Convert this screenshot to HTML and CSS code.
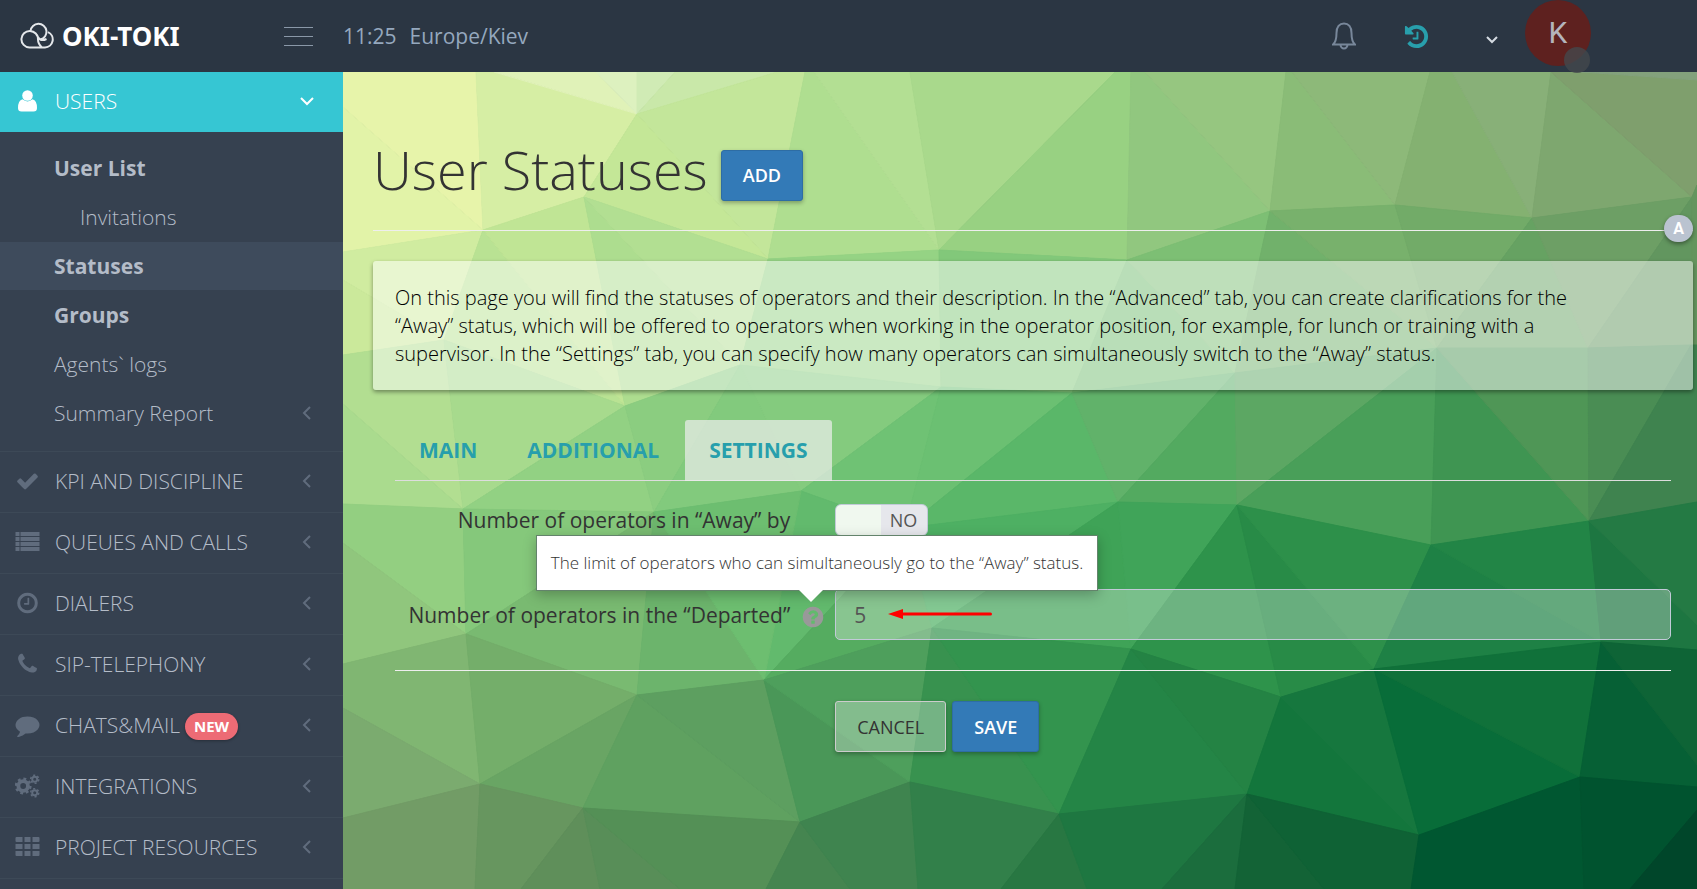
FILE: index.html
```html
<!DOCTYPE html>
<html lang="en">
<head>
<meta charset="utf-8">
<title>User Statuses</title>
<link rel="stylesheet" href="styles.css">
</head>
<body>
<header class="topbar">
  <div class="brand-area">
    <a class="brand" href="#">
      <svg class="brand-mark" viewBox="0 0 34 28" aria-hidden="true"><path d="M9.500 25.500A8.300 8.300 0 1 1 18 17.500Q18 22 22 25.500M9.500 25.500H25A8 8 0 0 0 28 10.200M10.500 9A8 8 0 1 1 20.500 17.500M17 13Q19.500 20.500 26.500 17"/></svg>
      <span class="brand-name">OKI-TOKI</span>
    </a>
    <button class="burger" type="button" aria-label="Toggle menu"><span></span><span></span><span></span></button>
  </div>
  <div class="clock"><time>11:25</time><span>Europe/Kiev</span></div>
  <div class="tools">
    <button class="tool" type="button" aria-label="Notifications"><svg class="bell" viewBox="0 0 24 28"><path d="M1 22.500C4 20 4.500 17 4.500 11C4.500 5 7.500 1.500 12 1.500S19.500 5 19.500 11C19.500 17 20 20 23 22.500ZM8.500 22.500A3.500 4 0 0 0 15.500 22.500"/></svg></button>
    <button class="tool" type="button" aria-label="History"><svg class="history" viewBox="0 0 1792 1792"><path d="M1664 896q0 156-61 298t-164 245-245 164-298 61q-172 0-327-72.500t-264-204.500q-7-10-6.500-22.500t8.500-20.500l137-138q10-9 25-9 16 2 23 12 73 95 179 147t225 52q104 0 198.500-40.500t163.500-109.500 109.500-163.500 40.500-198.500-40.500-198.500-109.500-163.500-163.500-109.500-198.500-40.500q-98 0-188 35.500t-160 101.500l137 138q31 30 14 69-17 40-59 40h-448q-26 0-45-19t-19-45v-448q0-42 40-59 39-17 69 14l130 129q107-101 244.500-156.500t284.500-55.500q156 0 298 61t245 164 164 245 61 298zm-640-288v448q0 14-9 23t-23 9h-320q-14 0-23-9t-9-23v-64q0-14 9-23t23-9h224v-352q0-14 9-23t23-9h64q14 0 23 9t9 23z"/></svg></button>
    <button class="profile" type="button" aria-label="Profile">
      <svg class="caret" viewBox="0 0 14 10"><path d="M2 2l5 5 5-5"/></svg>
      <span class="avatar">K<span class="presence"></span></span>
    </button>
  </div>
</header>
<div class="layout">
  <nav class="sidebar">
    <a class="section active" href="#"><svg class="icon" viewBox="0 0 24 24"><circle cx="12" cy="6.500" r="5.300"/><path d="M7 10.300Q12 14.500 17 10.300Q21.500 11.500 21.500 19Q21.500 22.500 18 22.500H6Q2.500 22.500 2.500 19Q2.500 11.500 7 10.300Z"/></svg><span>USERS</span><svg class="open" viewBox="0 0 14 10"><path d="M1 2l6 6 6-6"/></svg></a>
    <div class="submenu">
      <a class="strong" href="#">User List</a>
      <a class="nested" href="#">Invitations</a>
      <a class="strong current" href="#">Statuses</a>
      <a class="strong" href="#">Groups</a>
      <a href="#">Agents` logs</a>
      <a href="#"><span>Summary Report</span><svg class="closed" viewBox="0 0 10 14"><path d="M8 1L2 7l6 6"/></svg></a>
    </div>
    <a class="section" href="#"><svg class="icon" viewBox="0 0 1792 1792"><path d="M1671 566q0 40-28 68l-724 724-136 136q-28 28-68 28t-68-28l-136-136-362-362q-28-28-28-68t28-68l136-136q28-28 68-28t68 28l294 295 656-657q28-28 68-28t68 28l136 136q28 28 28 68z"/></svg><span>KPI AND DISCIPLINE</span><svg class="closed" viewBox="0 0 10 14"><path d="M8 1L2 7l6 6"/></svg></a>
    <a class="section" href="#"><svg class="icon" viewBox="0 0 24 24"><path d="M0 2h4v4H0zM5 2h19v4H5zM0 7h4v4H0zM5 7h19v4H5zM0 12h4v4H0zM5 12h19v4H5zM0 17h4v4H0zM5 17h19v4H5z"/></svg><span>QUEUES AND CALLS</span><svg class="closed" viewBox="0 0 10 14"><path d="M8 1L2 7l6 6"/></svg></a>
    <a class="section" href="#"><svg class="icon" viewBox="0 0 1792 1792"><path d="M1024 544v448q0 14-9 23t-23 9h-320q-14 0-23-9t-9-23v-64q0-14 9-23t23-9h224v-352q0-14 9-23t23-9h64q14 0 23 9t9 23zm416 352q0-148-73-273t-198-198-273-73-273 73-198 198-73 273 73 273 198 198 273 73 273-73 198-198 73-273zm224 0q0 209-103 385.500t-279.500 279.500-385.500 103-385.500-103-279.500-279.500-103-385.500 103-385.500 279.500-279.500 385.500-103 385.500 103 279.500 279.500 103 385.500z"/></svg><span>DIALERS</span><svg class="closed" viewBox="0 0 10 14"><path d="M8 1L2 7l6 6"/></svg></a>
    <a class="section" href="#"><svg class="icon" viewBox="0 0 1792 1792"><path d="M1600 1240q0 27-10 70.500t-21 68.500q-21 50-122 106-94 51-186 51-27 0-53-3.500t-57.500-12.500-47-14.500-55.500-20.500-49-18q-98-35-175-83-127-79-264-216t-216-264q-48-77-83-175-3-9-18-49t-20.500-55.500-14.500-47-12.500-57.500-3.500-53q0-92 51-186 56-101 106-122 25-11 68.500-21t70.500-10q14 0 21 3 18 6 53 76 11 19 30 54t35 63.500 31 53.500q3 4 17.500 25t21.500 35.500 7 28.500q0 20-28.500 50t-62 55-62 53-28.500 46q0 9 5 22.500t8.500 20.500 14 24 11.500 19q76 137 174 235t235 174q2 1 19 11.500t24 14 20.500 8.500 22.500 5q18 0 46-28.500t53-62 55-62 50-28.500q14 0 28.500 7t35.500 21.500 25 17.500q25 15 53.500 31t63.500 35 54 30q70 35 76 53 3 7 3 21z"/></svg><span>SIP-TELEPHONY</span><svg class="closed" viewBox="0 0 10 14"><path d="M8 1L2 7l6 6"/></svg></a>
    <a class="section" href="#"><svg class="icon" viewBox="0 0 1792 1792"><path d="M1792 896q0 174-120 321.500t-326 233-450 85.500q-70 0-145-8-198 175-460 242-49 14-114 22-17 2-30.500-9t-17.500-29v-1q-3-4-.5-12t2-10 4.500-9.500l6-9 7-8.500 8-9q7-8 31-34.500t34.500-38 31-39.500 32.500-51 27-59 26-76q-157-89-247.500-220t-90.500-281q0-130 71-248.500t191-204.500 286-136.500 348-50.500q244 0 450 85.500t326 233 120 321.500z"/></svg><span>CHATS&amp;MAIL</span><span class="new">NEW</span><svg class="closed" viewBox="0 0 10 14"><path d="M8 1L2 7l6 6"/></svg></a>
    <a class="section" href="#"><svg class="icon cogs" viewBox="0 0 26 24"><circle cx="8.500" cy="12" r="5" stroke-width="4"/><circle cx="8.500" cy="12" r="7.500" stroke-width="2.500" stroke-dasharray="2.950 2.940"/><circle cx="20.500" cy="5" r="2.600" stroke-width="2"/><circle cx="20.500" cy="5" r="4.200" stroke-width="1.600" stroke-dasharray="2.200 2.198"/><circle cx="20.500" cy="19" r="2.600" stroke-width="2"/><circle cx="20.500" cy="19" r="4.200" stroke-width="1.600" stroke-dasharray="2.200 2.198"/></svg><span>INTEGRATIONS</span><svg class="closed" viewBox="0 0 10 14"><path d="M8 1L2 7l6 6"/></svg></a>
    <a class="section last" href="#"><svg class="icon" viewBox="0 0 24 24"><path d="M1 2h6v5H1q-1 0-1-1V3q0-1 1-1zM9 2h6v5H9zM17 2h6q1 0 1 1v3q0 1-1 1h-6zM0 9h7v5H0zM9 9h6v5H9zM17 9h7v5h-7zM0 16h7v5H1q-1 0-1-1zM9 16h6v5H9zM17 16h7v4q0 1-1 1h-6z"/></svg><span>PROJECT RESOURCES</span><svg class="closed" viewBox="0 0 10 14"><path d="M8 1L2 7l6 6"/></svg></a>
  </nav>
  <main class="content">
    <svg class="mesh" viewBox="343 72 1354 817" preserveAspectRatio="none" aria-hidden="true">
      <polygon color="#e7f4aa" points="343,72 476,72 483,230 343,107"/>
      <polygon color="#e2f3a8" points="343,107 483,230 343,252"/>
      <polygon color="#d6eea4" points="476,72 494,72 637,114 584,197 483,230"/>
      <polygon color="#e0f2b8" points="494,72 596,72 637,114"/>
      <polygon color="#ddf1bf" points="596,72 637,72 637,114"/>
      <polygon color="#d0ebb5" points="637,72 675,72 637,114"/>
      <polygon color="#c9e8a9" points="675,72 777,72 637,114"/>
      <polygon color="#c3e69a" points="777,72 805,72 768,259 637,114"/>
      <polygon color="#c4e797" points="637,114 768,259 584,197"/>
      <polygon color="#afde90" points="805,72 814,72 939,250 768,259"/>
      <polygon color="#b3df93" points="814,72 910,72 939,250"/>
      <polygon color="#a9d98c" points="910,72 1115,72 939,250"/>
      <polygon color="#98d182" points="1115,72 1131,72 1127,260 939,250"/>
      <polygon color="#91c77f" points="1131,72 1145,72 1270,211 1127,260"/>
      <polygon color="#96c680" points="1145,72 1286,72 1270,211"/>
      <polygon color="#8abc77" points="1286,72 1292,72 1395,205 1270,211"/>
      <polygon color="#8db979" points="1292,72 1430,72 1395,205"/>
      <polygon color="#84b171" points="1430,72 1452,72 1532,218 1395,205"/>
      <polygon color="#88b078" points="1452,72 1551,72 1532,218"/>
      <polygon color="#7ea76f" points="1551,72 1692,197 1532,218"/>
      <polygon color="#7f9f6d" points="1551,72 1581,72 1697,80 1697,185 1692,197"/>
      <polygon color="#83a17c" points="1581,72 1697,72 1697,80"/>
      <polygon color="#d0eca0" points="483,230 343,252 343,280 444,340"/>
      <polygon color="#cbe99b" points="343,280 444,340 343,355"/>
      <polygon color="#b9e293" points="483,230 444,340 625,406"/>
      <polygon color="#c0e595" points="483,230 584,197 625,406"/>
      <polygon color="#addd8f" points="584,197 625,406 740,365"/>
      <polygon color="#b2df92" points="584,197 740,365 768,259"/>
      <polygon color="#95d384" points="768,259 740,365 941,387 939,250"/>
      <polygon color="#82c87a" points="939,250 941,387 1072,393 1127,260"/>
      <polygon color="#73bd70" points="1127,260 1235,373 1072,393"/>
      <polygon color="#7dbf74" points="1127,260 1270,211 1235,373"/>
      <polygon color="#71b16b" points="1270,211 1437,348 1235,373"/>
      <polygon color="#78b16c" points="1270,211 1395,205 1437,348"/>
      <polygon color="#72ab68" points="1395,205 1532,218 1437,348"/>
      <polygon color="#66a262" points="1532,218 1588,348 1437,348"/>
      <polygon color="#6d9f65" points="1532,218 1692,197 1588,348"/>
      <polygon color="#62965f" points="1692,197 1691,345 1588,348"/>
      <polygon color="#64955e" points="1692,197 1697,185 1697,345 1691,345"/>
      <polygon color="#b2de91" points="343,355 444,340 463,509 343,404"/>
      <polygon color="#aadb8e" points="343,404 463,509 343,504"/>
      <polygon color="#a7da8d" points="444,340 625,406 463,509"/>
      <polygon color="#92d183" points="625,406 463,509 654,512"/>
      <polygon color="#8bcd80" points="625,406 740,365 654,512"/>
      <polygon color="#82ca7d" points="740,365 654,512 801,491"/>
      <polygon color="#84cb7e" points="740,365 941,387 801,491"/>
      <polygon color="#6fc274" points="941,387 801,491 905,528"/>
      <polygon color="#6bc072" points="941,387 1072,393 905,528"/>
      <polygon color="#5ab769" points="1072,393 905,528 1118,502"/>
      <polygon color="#62ba6d" points="801,491 905,528 764,680"/>
      <polygon color="#61b26a" points="1072,393 1235,373 1118,502"/>
      <polygon color="#53aa60" points="1235,373 1237,505 1118,502"/>
      <polygon color="#5ca763" points="1235,373 1437,348 1237,505"/>
      <polygon color="#499f59" points="1437,348 1237,505 1431,545"/>
      <polygon color="#3f9552" points="1437,348 1431,545 1589,521"/>
      <polygon color="#4f9656" points="1437,348 1588,348 1589,521"/>
      <polygon color="#4a8d54" points="1588,348 1691,345 1589,521"/>
      <polygon color="#3f834f" points="1691,345 1697,345 1697,502 1589,521"/>
      <polygon color="#93cf81" points="343,504 463,509 466,634 343,543"/>
      <polygon color="#90c67d" points="343,543 466,634 343,664"/>
      <polygon color="#85c87b" points="463,509 654,512 466,634"/>
      <polygon color="#79ba71" points="466,634 654,512 637,695"/>
      <polygon color="#6cb46c" points="654,512 637,695 764,680"/>
      <polygon color="#6dbe70" points="654,512 801,491 764,680"/>
      <polygon color="#55ac60" points="905,528 764,680 932,628"/>
      <polygon color="#4eb063" points="905,528 1118,502 932,628"/>
      <polygon color="#3fa357" points="1118,502 932,628 1131,649"/>
      <polygon color="#40a459" points="1118,502 1237,505 1131,649"/>
      <polygon color="#2e934b" points="1237,505 1131,649 1281,697"/>
      <polygon color="#288b47" points="1237,505 1281,697 1374,669"/>
      <polygon color="#2d904a" points="1237,505 1431,545 1374,669"/>
      <polygon color="#1e8145" points="1431,545 1374,669 1601,642"/>
      <polygon color="#228546" points="1431,545 1589,521 1601,642"/>
      <polygon color="#1d7641" points="1589,521 1601,642 1697,650 1697,625"/>
      <polygon color="#247a44" points="1589,521 1697,502 1697,625"/>
      <polygon color="#80b672" points="343,664 466,634 480,784 343,708"/>
      <polygon color="#7bab6f" points="343,708 480,784 343,818"/>
      <polygon color="#74ae6a" points="466,634 637,695 480,784"/>
      <polygon color="#69a564" points="637,695 480,784 583,808"/>
      <polygon color="#5fa160" points="637,695 583,808 800,822"/>
      <polygon color="#5d9f60" points="637,695 764,680 800,822"/>
      <polygon color="#4a9758" points="764,680 800,822 910,782"/>
      <polygon color="#4e9f5c" points="764,680 932,628 910,782"/>
      <polygon color="#38924f" points="932,628 910,782 1059,814"/>
      <polygon color="#33944e" points="932,628 1131,649 1059,814"/>
      <polygon color="#248546" points="1131,649 1059,814 1247,794"/>
      <polygon color="#248344" points="1131,649 1281,697 1247,794"/>
      <polygon color="#13763c" points="1281,697 1247,794 1419,835"/>
      <polygon color="#16773e" points="1281,697 1374,669 1419,835"/>
      <polygon color="#086d39" points="1374,669 1419,835 1580,777"/>
      <polygon color="#10713a" points="1374,669 1601,642 1580,777"/>
      <polygon color="#066035" points="1601,642 1580,777 1697,787 1697,765"/>
      <polygon color="#0e6436" points="1601,642 1697,650 1697,765"/>
      <polygon color="#729c66" points="343,818 480,784 475,889 343,889"/>
      <polygon color="#67965f" points="480,784 583,808 521,889 475,889"/>
      <polygon color="#5f8f5a" points="583,808 521,889 600,889"/>
      <polygon color="#588e58" points="583,808 600,889 680,889"/>
      <polygon color="#549056" points="583,808 800,822 766,889 680,889"/>
      <polygon color="#458550" points="800,822 766,889 850,889"/>
      <polygon color="#3f844f" points="800,822 910,782 918,889 850,889"/>
      <polygon color="#32804a" points="910,782 918,889 1001,889 1059,814"/>
      <polygon color="#287742" points="1059,814 1001,889 1087,889"/>
      <polygon color="#1e7741" points="1059,814 1087,889 1162,889 1247,794"/>
      <polygon color="#1b6d3d" points="1247,794 1162,889 1235,889"/>
      <polygon color="#136336" points="1247,794 1235,889 1324,889"/>
      <polygon color="#0f6235" points="1247,794 1419,835 1411,889 1324,889"/>
      <polygon color="#005731" points="1419,835 1411,889 1584,889 1580,777"/>
      <polygon color="#00532f" points="1580,777 1697,787 1697,810 1630,889 1584,889"/>
      <polygon color="#00462a" points="1697,810 1697,889 1630,889"/>
    </svg>
    <div class="page-head">
      <h1>User Statuses</h1>
      <button class="btn primary" type="button">ADD</button>
      <button class="auto" type="button">A</button>
    </div>
    <p class="note">On this page you will find the statuses of operators and their description. In the “Advanced” tab, you can create clarifications for the “Away” status, which will be offered to operators when working in the operator position, for example, for lunch or training with a supervisor. In the “Settings” tab, you can specify how many operators can simultaneously switch to the “Away” status.</p>
    <form class="settings">
      <div class="tabs" role="tablist">
        <a href="#" role="tab">MAIN</a>
        <a href="#" role="tab">ADDITIONAL</a>
        <a class="selected" href="#" role="tab" aria-selected="true">SETTINGS</a>
      </div>
      <div class="row first">
        <label class="caption" for="away">Number of operators in “Away” by</label>
        <div class="toggle"><input id="away" type="checkbox"><span class="state">NO</span></div>
      </div>
      <div class="row">
        <label class="caption" for="departed">Number of operators in the “Departed”</label>
        <span class="help"><svg viewBox="0 0 1792 1792" aria-hidden="true"><path d="M1024 1376v-192q0-14-9-23t-23-9h-192q-14 0-23 9t-9 23v192q0 14 9 23t23 9h192q14 0 23-9t9-23zm256-672q0-88-55.500-163t-138.500-116-170-41q-243 0-371 213-15 24 8 42l132 100q7 6 19 6 16 0 25-12 53-68 86-92 34-24 86-24 48 0 85.500 26t37.500 59q0 38-20 61t-68 45q-63 28-115.500 86.500t-52.500 125.500v36q0 14 9 23t23 9h192q14 0 23-9t9-23q0-19 21.500-49.500t54.500-49.500q32-18 49-28.500t46-35 44.500-48 28-60.500 12.500-81zm384 192q0 209-103 385.500t-279.500 279.500-385.500 103-385.500-103-279.500-279.500-103-385.500 103-385.500 279.500-279.500 385.500-103 385.500 103 279.500 279.500 103 385.500z"/></svg><span class="tip" role="tooltip">The limit of operators who can simultaneously go to the “Away” status.</span></span>
        <div class="field">
          <input id="departed" type="text" value="5">
          <svg class="pointer" viewBox="0 0 104 10" aria-hidden="true"><path d="M0 5L15 0V10Z"/><path d="M12 3.500H102.500A1.500 1.500 0 0 1 102.500 6.500H12Z"/></svg>
        </div>
      </div>
      <div class="actions">
        <button class="btn plain" type="button">CANCEL</button>
        <button class="btn primary" type="submit">SAVE</button>
      </div>
    </form>
  </main>
</div>
</body>
</html>
```
FILE: styles.css
```css
* { box-sizing: border-box; }
body {
  margin: 0;
  min-height: 100vh;
  display: flex;
  flex-direction: column;
  font: 21px/28px "Open Sans", "Noto Sans", sans-serif;
  color: #333;
  background: #364150;
}
a { text-decoration: none; color: inherit; }
button { font: inherit; border: 0; background: none; padding: 0; cursor: pointer; }

.topbar { display: flex; align-items: center; height: 72px; background: #2b3643; position: relative; z-index: 2; }
.brand-area { width: 343px; padding: 0 30px 0 20px; display: flex; align-items: center; justify-content: space-between; }
.brand { display: flex; align-items: center; gap: 8px; color: #fff; }
.brand-mark { width: 34px; height: 28px; fill: none; stroke: #e4e7ea; stroke-width: 2; }
.brand-name { font-size: 26px; font-weight: 700; font-family: "Noto Sans", sans-serif; }
.burger { width: 29px; display: flex; flex-direction: column; gap: 8px; }
.burger span { height: 1px; background: #8a98a8; }
.clock { display: flex; gap: 13px; color: #95a8be; }
.tools { margin-left: auto; padding-right: 106px; display: flex; align-items: center; }
.tool { width: 73px; display: flex; justify-content: center; }
.bell { width: 24px; height: 28px; fill: none; stroke: #78879a; stroke-width: 2; }
.history { width: 27px; height: 27px; fill: #289fac; }
.profile { display: flex; align-items: center; gap: 26px; margin-left: 32px; }
.caret { width: 14px; height: 10px; fill: none; stroke: #d5dbe2; stroke-width: 2; margin-top: 8px; }
.avatar { position: relative; width: 66px; height: 66px; border-radius: 50%; background: #5e211f; color: #b4b4bc; font: 30px/66px Roboto, sans-serif; margin-bottom: 6px; }
.presence { position: absolute; right: 1px; bottom: -7px; width: 26px; height: 26px; border-radius: 50%; background: rgba(68, 72, 76, .8); }

.layout { flex: 1; display: flex; }
.sidebar { width: 343px; flex: none; background: #364150; color: #b4bcc8; font-weight: 300; }
.section { display: flex; align-items: center; height: 61px; padding: 0 29px 2px 15px; border-top: 1px solid #3d4957; }
.section.active { height: 60px; border: 0; background: #36c6d3; color: #fff; }
.section.last { height: 62px; border-bottom: 1px solid #3d4957; }
.icon { width: 25px; height: 24px; margin-right: 15px; fill: #606c7d; }
.cogs { fill: none; stroke: #606c7d; }
.active .icon { fill: #fff; }
.closed { width: 10px; height: 14px; margin-left: auto; margin-right: 2px; fill: none; stroke: #606c7d; stroke-width: 2; }
.open { width: 14px; height: 10px; margin-left: auto; fill: none; stroke: #fff; stroke-width: 2; }
.new { margin: 3px 0 0 5px; padding: 0 9px; border-radius: 14px; background: #ed6b75; color: #fff; font-size: 15px; font-weight: 700; line-height: 27px; box-shadow: 0 1px 3px rgba(0, 0, 0, .3); }
.submenu { display: flex; flex-direction: column; gap: 1px; padding: 12px 0 14px; }
.submenu a { display: flex; align-items: center; height: 48px; padding: 0 29px 0 54px; }
.submenu .strong { font-weight: 700; }
.submenu .nested { padding-left: 80px; }
.submenu .current { background: #3e4b5c; }

.content { position: relative; z-index: 1; flex: 1; min-width: 0; padding: 66px 4px 0 30px; }
.mesh { position: absolute; z-index: -1; inset: 0; width: 100%; height: 100%; }
.mesh polygon { fill: currentColor; stroke: currentColor; stroke-width: 1px; }
.page-head { position: relative; display: flex; align-items: center; gap: 13px; height: 93px; padding-bottom: 30px; border-bottom: 1px solid #eee; }
h1 { margin: 0; font-size: 54px; line-height: 64px; font-weight: 300; }
.btn { height: 51px; padding: 0 21px; border: 1px solid #2e6da4; border-radius: 3px; font-size: 18px; font-weight: 600; box-shadow: 0 2px 4px rgba(0, 0, 0, .3); }
.primary { background: #337ab7; color: #fff; }
.page-head .btn { margin-top: 12px; }
.auto { position: absolute; right: 0; bottom: -12px; width: 29px; height: 27px; border-radius: 14px; background: #bac3d0; color: #fff; font: 700 16px/27px Roboto, sans-serif; box-shadow: 0 2px 4px rgba(0, 0, 0, .4); }
.note { margin: 30px 0; padding: 23px 80px 22px 22px; border-radius: 3px; background: rgba(255, 255, 255, .5); color: #000; font-size: 20px; font-weight: 350; box-shadow: 0 2px 4px rgba(0, 0, 0, .4); }

.settings { padding: 0 22px; }
.tabs { display: flex; gap: 2px; border-bottom: 1px solid #ddd; color: #279fac; font-weight: 700; }
.tabs a { padding: 16px 24px; }
.tabs .selected { background: rgba(238, 238, 238, .7); border-radius: 3px 3px 0 0; margin-bottom: -1px; padding-bottom: 17px; }
.row { display: grid; grid-template-columns: calc(34.5% - 36px) 36px 1fr; align-items: center; }
.first { padding: 23px 0 53px; }
.caption { text-align: right; padding-right: 9px; }
.toggle { grid-column: 3; justify-self: start; position: relative; }
.toggle input { appearance: none; display: block; margin: 0; width: 93px; height: 32px; border: 1px solid #c2cad8; border-radius: 6px; background: linear-gradient(90deg, #f0f8ef 50%, #e6e7ec 50%); }
.state { position: absolute; right: 11px; top: 2px; font-size: 18px; color: #555; pointer-events: none; }
.help { position: relative; display: flex; padding: 4px 0 0 2px; }
.help svg { width: 24px; height: 24px; fill: #999; }
.tip { position: absolute; right: -263px; bottom: 38px; padding: 13px 14px; border: 1px solid rgba(60, 100, 70, .8); background: #fff; color: #333; font-size: 17px; font-weight: 350; white-space: nowrap; box-shadow: 0 4px 12px rgba(0, 0, 0, .25); z-index: 3; }
.tip::after { content: ""; position: absolute; right: 274px; top: 100%; border: 12px solid transparent; border-top-color: #fff; border-bottom: 0; }
.field { position: relative; }
.field input { display: block; width: 100%; height: 51px; padding: 0 18px; border: 1px solid #c2cad8; border-radius: 5px; background: rgba(255, 255, 255, .3); color: #555; font: inherit; }
.pointer { position: absolute; left: 53px; top: 20px; width: 104px; height: 10px; fill: #f00; }
.actions { display: flex; gap: 6px; margin-top: 30px; padding: 30px 0 0 34.5%; border-top: 1px solid #eee; }
.plain { background: rgba(255, 255, 255, .3); border-color: #ccc; color: #333; font-weight: 500; }
```
